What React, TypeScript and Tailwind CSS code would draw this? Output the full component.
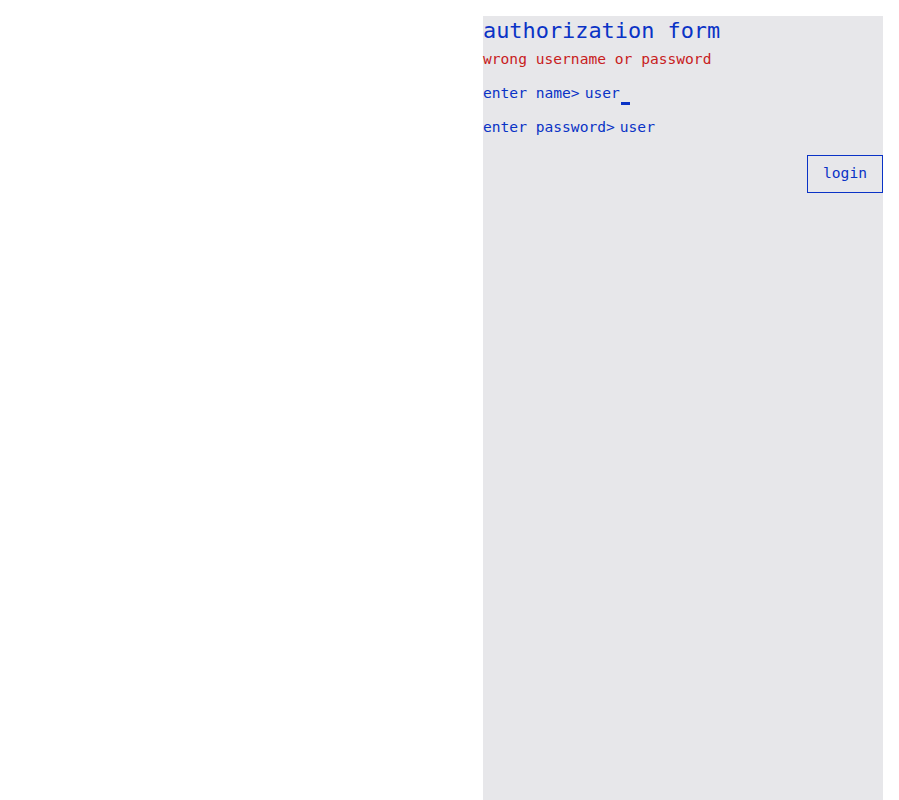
import { useState } from "react";

const mono = "font-['DejaVu_Sans_Mono',monospace]";

export default function App() {
  const [name, setName] = useState("user");
  const [password, setPassword] = useState("user");

  return (
    <div className={`flex justify-end min-h-screen bg-white ${mono}`}>
      <div className="w-[400px] h-screen mt-4 mr-4 bg-[#e7e7ea] text-[#0a33c6] flex flex-col">
        <h1 className="text-[21.9px] leading-[30px] h-[30px]">authorization form</h1>
        <p className="text-[14.6px] leading-[20px] mt-[3px] text-[#c8201c]">wrong username or password</p>

        <div className="flex items-center mt-[14px] h-[20px] text-[14.6px] leading-[20px]">
          <span>enter name&gt;</span>
          <span className="ml-[5px]">{name}</span>
          <span className="ml-[1px] self-end mb-[-2px] w-[9px] h-[3px] bg-[#0a33c6]" />
        </div>
        <div className="flex items-center mt-[14px] h-[20px] text-[14.6px] leading-[20px]">
          <span>enter password&gt;</span>
          <span className="ml-[5px]">{password}</span>
        </div>

        <div className="flex justify-end mt-[18px]">
          <button
            onClick={() => { setName(name); setPassword(password); }}
            className="w-[76px] h-[38px] pb-[2px] border border-[#0a33c6] text-[14.6px] text-[#0a33c6]"
          >
            login
          </button>
        </div>
      </div>
    </div>
  );
}
